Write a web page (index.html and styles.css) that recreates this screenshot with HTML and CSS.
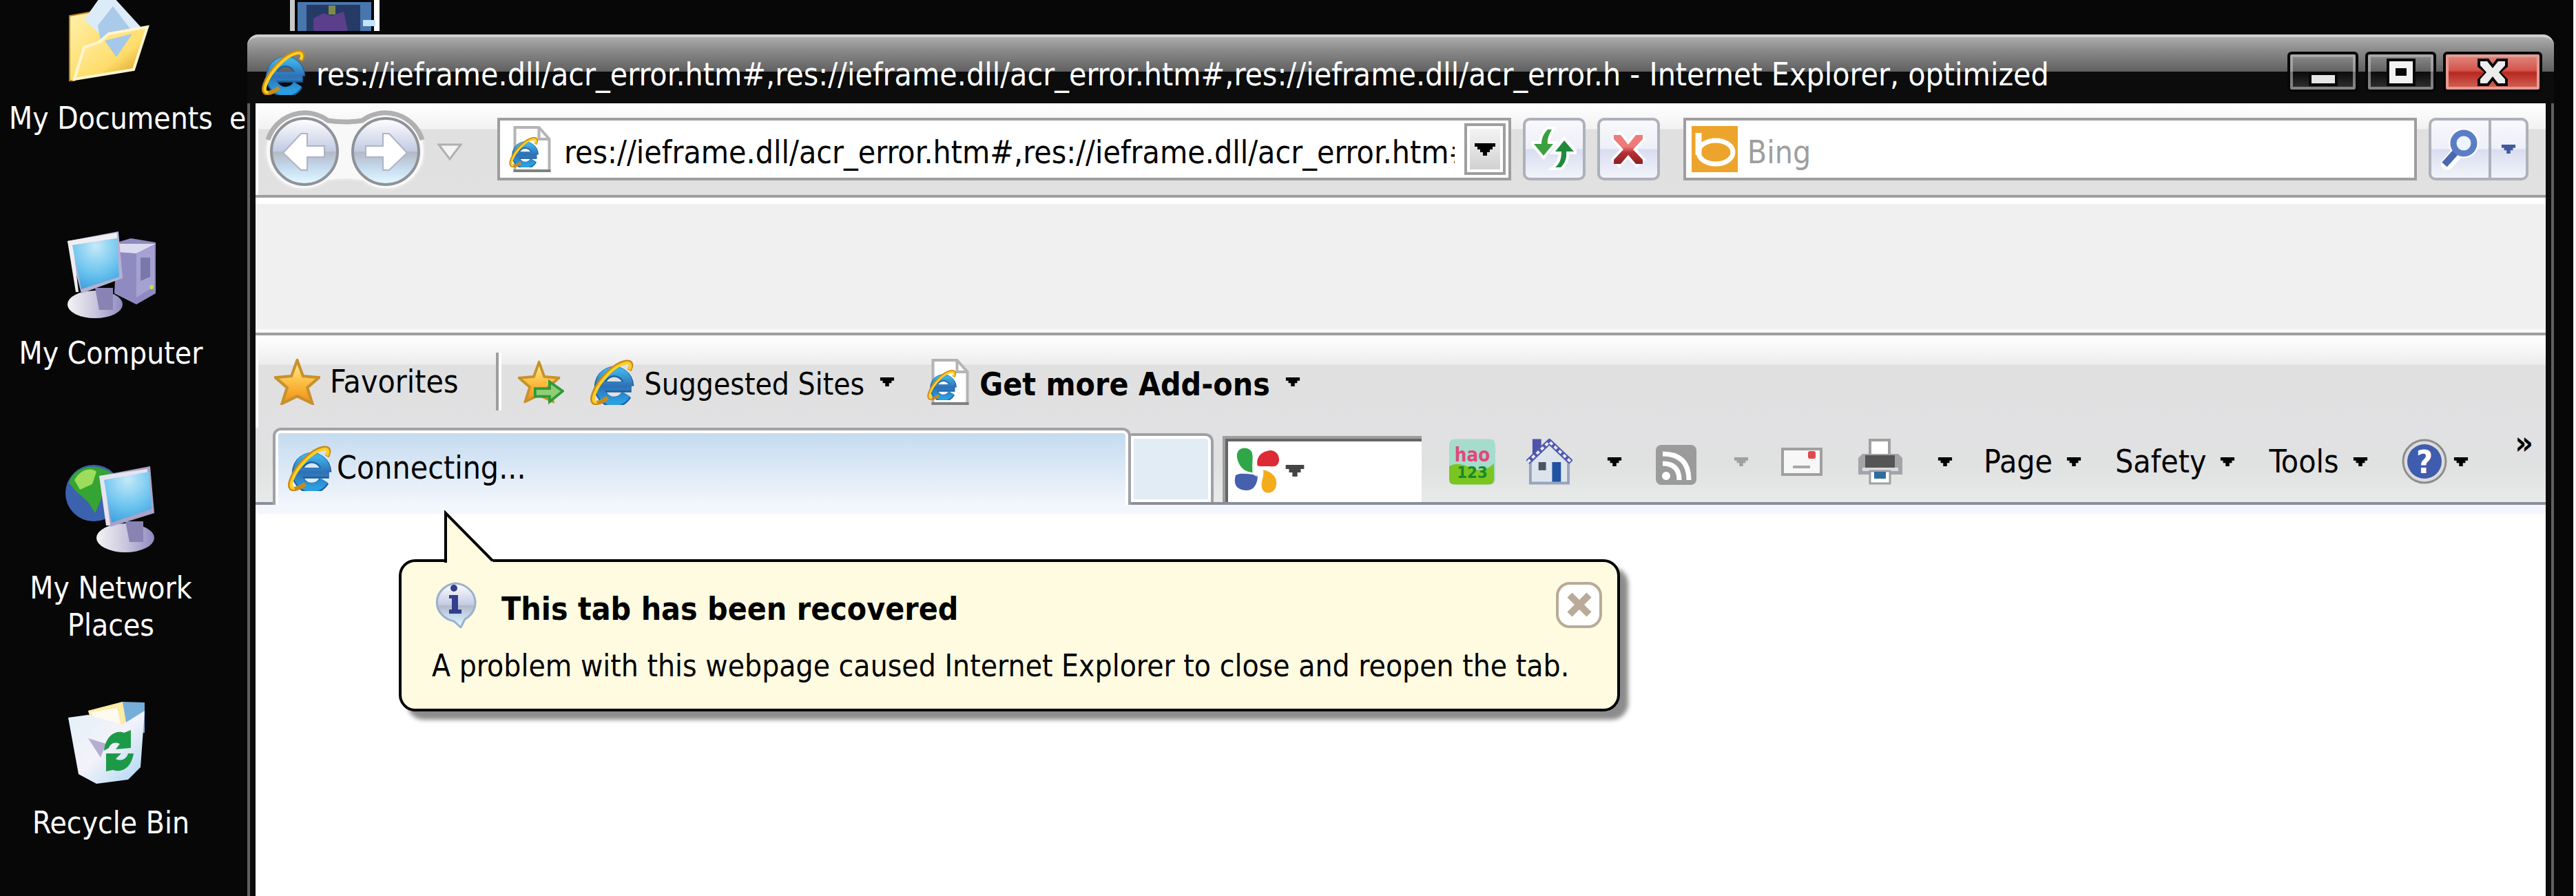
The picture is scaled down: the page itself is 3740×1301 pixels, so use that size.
FILE: index.html
```html
<!DOCTYPE html>
<html lang="en">
<head>
  <meta charset="UTF-8" />
  <title>Internet Explorer, optimized</title>
  <link rel="stylesheet" href="styles.css">
</head>
<body>

  <!-- shared icon shapes -->
  <svg class="sprites" width="0" height="0" aria-hidden="true">
    <defs>
      <linearGradient id="blue" x1="0" y1="0" x2="0" y2="1">
        <stop offset="0" stop-color="#3fb0e6" />
        <stop offset="0.5" stop-color="#2f6fb5" />
        <stop offset="1" stop-color="#2a9fe2" />
      </linearGradient>
      <linearGradient id="gold" x1="0" y1="0" x2="0" y2="1">
        <stop offset="0" stop-color="#fff3a0" />
        <stop offset="0.45" stop-color="#fdc44a" />
        <stop offset="1" stop-color="#f08f14" />
      </linearGradient>
      <linearGradient id="folder" x1="0" y1="0" x2="1" y2="1">
        <stop offset="0" stop-color="#fff2b0" />
        <stop offset="0.6" stop-color="#ffdc6a" />
        <stop offset="1" stop-color="#c98d16" />
      </linearGradient>
      <radialGradient id="screen" cx="0.5" cy="0.15" r="0.9">
        <stop offset="0" stop-color="#c4e9f8" />
        <stop offset="0.6" stop-color="#6cc4ef" />
        <stop offset="1" stop-color="#3d9fdc" />
      </radialGradient>
      <linearGradient id="plastic" x1="0" y1="0" x2="1" y2="0">
        <stop offset="0" stop-color="#f4f4f4" />
        <stop offset="0.5" stop-color="#c9c6de" />
        <stop offset="1" stop-color="#8f8abf" />
      </linearGradient>
      <linearGradient id="orb" x1="0" y1="0" x2="0" y2="1">
        <stop offset="0" stop-color="#ffffff" />
        <stop offset="0.49" stop-color="#c3cbe4" />
        <stop offset="0.51" stop-color="#b4b9c4" />
        <stop offset="0.75" stop-color="#c6dbef" />
        <stop offset="1" stop-color="#e6fbff" />
      </linearGradient>
      <linearGradient id="redx" x1="0" y1="0" x2="0" y2="1">
        <stop offset="0.4" stop-color="#ef7a7a" />
        <stop offset="0.6" stop-color="#b83236" />
        <stop offset="1" stop-color="#8c2024" />
      </linearGradient>
      <linearGradient id="bin" x1="0" y1="0" x2="1" y2="1">
        <stop offset="0" stop-color="#e2f0f8" />
        <stop offset="0.5" stop-color="#f4f2fa" />
        <stop offset="1" stop-color="#a8d4f2" />
      </linearGradient>
    </defs>
    <symbol id="ie" viewBox="0 0 64 64">
      <path d="M59 39H22M55 38A20 21 0 1 0 52 50" fill="none" stroke="#1d5f9f" stroke-width="15" />
      <path d="M58 38H20M55 37A20 21 0 1 0 52 49" fill="none" stroke="url(#blue)" stroke-width="12" />
      <path d="M56 16C66-2 44 2 26 20C6 40-2 64 12 61C18 60 22 57 26 54" fill="none" stroke="#c98a1c" stroke-width="6" />
      <path d="M56 15C63 0 44 4 27 21C8 40 1 62 11 60" fill="none" stroke="#fdd020" stroke-width="4" />
    </symbol>
    <symbol id="page" viewBox="0 0 64 67">
      <path d="M12 2H47L62 19V65H12Z" fill="#fff" stroke="#b4b4b4" stroke-width="4" />
      <path d="M47 2V19H62" fill="none" stroke="#b4b4b4" stroke-width="4" />
      <path d="M10 65H64" stroke="#808080" stroke-width="4" />
      <use href="#ie" x="0" y="15" width="50" height="45" />
    </symbol>
    <symbol id="star" viewBox="0 0 64 64">
      <path d="M32 2L40 24L62 26L46 40L53 62L32 52L11 62L18 40L2 26L24 24Z" fill="url(#gold)" stroke="#c8912c" stroke-width="4" />
    </symbol>
    <symbol id="down" viewBox="0 0 24 14">
      <path d="M1 0H23V5H19V9H15V14H9V9H5V5H1Z" fill="currentColor" />
    </symbol>
    <symbol id="cross" viewBox="0 0 40 40">
      <path d="M6 6L34 34M34 6L6 34" stroke="currentColor" stroke-width="10" />
    </symbol>
  </svg>

  <main class="desktop">

    <ul class="shortcuts">
      <li class="shortcut">
        <svg viewBox="0 0 134 134">
          <path d="M7 32L40 26L56 50L84 62L14 126H7Z" fill="url(#folder)" stroke="#b98420" stroke-width="2" />
          <path d="M28 38L52 4L70 4L112 50L84 60L60 66Z" fill="#dcebf8" />
          <path d="M70 18L96 52L52 68L48 46Z" fill="#a9cbe9" />
          <path d="M28 78L50 70L64 58L120 48L100 110L14 124Z" fill="url(#folder)" stroke="#fff6cf" stroke-width="4" />
          <path d="M58 68L98 58L75 92Z" fill="#a5c8ea" />
        </svg>
        <span>My Documents</span>
      </li>
      <li class="shortcut">
        <svg viewBox="0 0 134 134">
          <path d="M76 20L96 14L132 20V94L104 110L72 94Z" fill="#8f8bc0" />
          <path d="M76 22L132 22L104 36L78 34Z" fill="#dcdaf0" />
          <path d="M104 36L130 24V84L104 100Z" fill="#a5a2d2" />
          <path d="M110 42H124V70L110 76Z" fill="#7a77ab" />
          <circle cx="126" cy="85" r="3" fill="#c5e04a" />
          <ellipse cx="44" cy="110" rx="40" ry="20" fill="url(#plastic)" />
          <path d="M44 86H70V118H50Z" fill="#8883b2" />
          <path d="M4 18L78 4L84 72L24 94Z" fill="#b6b1d2" />
          <path d="M4 18L76 6V14L12 24L20 92H16Z" fill="#efeff2" />
          <path d="M11 24L76 14L79 70L24 88Z" fill="url(#screen)" />
        </svg>
        <span>My Computer</span>
      </li>
      <li class="shortcut">
        <svg viewBox="0 0 134 134">
          <circle cx="42" cy="43" r="41" fill="#3b62ae" />
          <path d="M6 28C14 4 44-2 68 14L56 36L52 54L44 72L34 56L16 40Z" fill="#35a432" />
          <path d="M14 24C24 6 40 6 46 12L40 30L22 38Z" fill="#9ddc5c" />
          <ellipse cx="88" cy="108" rx="42" ry="21" fill="url(#plastic)" />
          <path d="M88 84H114V114H94Z" fill="#8883b2" />
          <path d="M50 18L124 4L130 72L66 92Z" fill="#a9a3c9" />
          <path d="M50 18L120 8V14L58 24L66 90H60Z" fill="#e6e4ee" />
          <path d="M57 24L122 12L126 66L68 86Z" fill="url(#screen)" />
        </svg>
        <span>My Network Places</span>
      </li>
      <li class="shortcut">
        <svg viewBox="0 0 134 134">
          <path d="M34 18L84 5L116 6V50L60 50Z" fill="#76aeda" />
          <path d="M34 18L84 5L90 40L40 42Z" fill="#fdeaa4" />
          <path d="M38 20L76 14L82 40L44 42Z" fill="#fffaf0" />
          <path d="M5 28L34 24L84 38L116 18L110 100L92 118L46 124L20 110Z" fill="url(#bin)" />
          <path d="M34 58L60 66L52 86Z" fill="#b4afd0" />
          <path d="M57 76C60 50 78 46 86 50L96 46V72L74 74L80 66C72 62 66 66 64 72Z" fill="#1d9a48" />
          <path d="M100 80C96 104 80 108 70 104L60 106V80H82L74 88C82 92 90 88 92 80Z" fill="#1d9a48" />
        </svg>
        <span>Recycle Bin</span>
      </li>
    </ul>

    <div class="behind">
      <svg viewBox="0 0 134 134">
        <path d="M2 0H132V134H2Z" fill="#c8c8c8" />
        <path d="M124 0H132V134H124Z" fill="#fff" />
        <path d="M9 78H124V134H9Z" fill="#050505" />
        <path d="M13 92H120V134H13Z" fill="#4877ae" />
        <path d="M26 96H104V134H26Z" fill="#263a66" />
        <path d="M36 116L50 108L62 112L80 106L86 134H36Z" fill="#5b3f8c" />
        <path d="M58 97H68V110H58Z" fill="#7c8a4a" />
        <path d="M108 118H126V127H108Z" fill="#c4e4fb" />
      </svg>
      <span>e</span>
    </div>

    <section class="window">

      <header class="titlebar">
        <svg class="icon"><use href="#ie" /></svg>
        <h1>res://ieframe.dll/acr_error.htm#,res://ieframe.dll/acr_error.htm#,res://ieframe.dll/acr_error.h - Internet Explorer, optimized</h1>
        <div class="window-buttons">
          <button class="win-btn" aria-label="Minimize">
            <svg viewBox="0 0 60 50"><path d="M9 26H51V46H9Z" fill="#070707" /><path d="M13 30H47V42H13Z" fill="#e6e6e6" /></svg>
          </button>
          <button class="win-btn" aria-label="Maximize">
            <svg viewBox="0 0 60 50"><path d="M9 6H51V46H9Z" fill="#070707" /><path d="M13 10H47V42H13ZM22 20V31H38V20Z" fill="#f2f2f2" fill-rule="evenodd" /></svg>
          </button>
          <button class="win-btn win-close" aria-label="Close">
            <svg viewBox="0 0 60 50"><path d="M8 6H24L30 14L36 6H52V18L42 26L52 36V46H36L30 38L24 46H8V36L18 26L8 18Z" fill="#0a0707" /><path d="M12 10H22L30 20L38 10H48V16L39 26L48 36V42H38L30 32L22 42H12V36L21 26L12 16Z" fill="#ececec" /></svg>
          </button>
        </div>
      </header>

      <div class="client">

        <nav class="navbar">
          <div class="travel">
            <svg class="shell" viewBox="0 0 232 116">
              <path d="M91 16Q116 20 141 16A56 56 0 1 1 141 104Q116 100 91 104A56 56 0 1 1 91 16Z" fill="#f8f8f8" stroke="#e6e6e6" stroke-width="3" />
              <path d="M4 44A56 56 0 0 1 91 16Q116 20 141 16A56 56 0 0 1 228 44" fill="none" stroke="#b0b0b0" stroke-width="7" />
            </svg>
            <button class="orb" aria-label="Back">
              <svg viewBox="0 0 102 102">
                <circle cx="51" cy="51" r="48" fill="url(#orb)" stroke="#8e9298" stroke-width="4" />
                <path d="M20 53L46 25H55V43H80V59H55V78H46Z" fill="#fff" stroke="#aeb4c6" stroke-width="2" />
              </svg>
            </button>
            <button class="orb" aria-label="Forward">
              <svg viewBox="0 0 102 102">
                <circle cx="51" cy="51" r="48" fill="url(#orb)" stroke="#8e9298" stroke-width="4" />
                <path d="M82 53L56 25H47V43H22V59H47V78H56Z" fill="#fff" stroke="#aeb4c6" stroke-width="2" />
              </svg>
            </button>
          </div>
          <button class="recent" aria-label="Recent pages">
            <svg viewBox="0 0 38 26"><path d="M3 2H35L19 23Z" fill="#f4f4f4" stroke="#b0b0b0" stroke-width="3" /></svg>
          </button>

          <div class="field address">
            <svg class="icon"><use href="#page" /></svg>
            <input type="text" aria-label="Address" value="res://ieframe.dll/acr_error.htm#,res://ieframe.dll/acr_error.htm#" />
            <button class="address-drop" aria-label="Show address list">
              <svg viewBox="0 0 32 18"><path d="M1 0H31V5H27V9H23V13H19V18H13V13H9V9H5V5H1Z" fill="#000" /></svg>
            </button>
          </div>

          <button class="soft-btn" aria-label="Refresh">
            <svg viewBox="0 0 66 66" stroke="#fff" stroke-width="8" paint-order="stroke">
              <path d="M24 4C18 10 15 17 15 25H4L18 42L32 25H24C23 18 26 11 30 4Z" fill="#3ba03f" />
              <path d="M48 20L35 36H44C44 46 42 53 35 59H43C49 53 52 46 51 36H62Z" fill="#1f8a3c" />
            </svg>
          </button>
          <button class="soft-btn" aria-label="Stop">
            <svg viewBox="0 0 66 66">
              <path d="M14 12L52 54M52 12L14 54" stroke="#fff" stroke-width="18" />
              <path d="M12 12H22L33 26L44 12H54V18L40 33L54 48V54H44L33 41L22 54H12V48L26 33L12 18Z" fill="url(#redx)" />
            </svg>
          </button>

          <div class="field search">
            <svg class="icon" viewBox="0 0 67 67">
              <rect width="67" height="67" fill="#eda42c" />
              <path d="M10 10V42" stroke="#fff" stroke-width="9" />
              <ellipse cx="35" cy="38" rx="25" ry="17" fill="none" stroke="#fff" stroke-width="7" />
            </svg>
            <input type="text" aria-label="Search" placeholder="Bing" />
          </div>

          <div class="split">
            <button class="soft-btn" aria-label="Search now">
              <svg viewBox="0 0 66 66">
                <path d="M14 54L30 36" stroke="#fff" stroke-width="18" stroke-linecap="round" />
                <circle cx="38" cy="24" r="15" fill="#fff" stroke="#fff" stroke-width="14" />
                <path d="M10 55L29 34" stroke="#4a68b0" stroke-width="10" />
                <circle cx="38" cy="24" r="15" fill="#edf4fb" stroke="#5b7dc4" stroke-width="9" />
              </svg>
            </button>
            <button class="soft-btn slim" aria-label="Search options">
              <svg class="arrow"><use href="#down" /></svg>
            </button>
          </div>
        </nav>

        <div class="band"></div>

        <div class="favbar">
          <button class="tool"><svg class="icon"><use href="#star" /></svg><span>Favorites</span></button>
          <span class="divider"></span>
          <button class="tool" aria-label="Add to Favorites Bar">
            <svg class="icon" viewBox="0 0 70 64">
              <use href="#star" width="64" height="64" />
              <path d="M26 42H48V32L68 46L48 62V54H26Z" fill="#8fce74" stroke="#2f9a3c" stroke-width="4" />
            </svg>
          </button>
          <button class="tool low suggested"><svg class="icon"><use href="#ie" /></svg><span>Suggested Sites</span><svg class="arrow"><use href="#down" /></svg></button>
          <button class="tool low strong"><svg class="icon"><use href="#page" /></svg><span>Get more Add-ons</span><svg class="arrow"><use href="#down" /></svg></button>
        </div>

        <div class="tabrow">
          <button class="tab active"><svg class="icon"><use href="#ie" /></svg><span>Connecting...</span></button>
          <button class="tab new" aria-label="New Tab"></button>

          <div class="toolbox">
            <button aria-label="Search provider">
              <svg class="icon" viewBox="0 0 67 67">
                <path d="M4 14C2-4 24-2 26 8C28 18 24 28 28 36C14 36 6 26 4 14Z" fill="#2fa648" />
                <path d="M34 28C30 12 42 4 54 4C68 6 68 26 58 27C50 28 42 26 34 28Z" fill="#dc2a36" />
                <path d="M2 40C8 36 22 38 34 40C34 50 30 62 18 62C4 62-2 54 2 40Z" fill="#4560ad" />
                <path d="M42 32C58 36 64 46 60 58C56 68 42 68 40 58C38 48 44 42 42 32Z" fill="#f5ac1c" />
                <circle cx="34" cy="34" r="8" fill="#fff" opacity="0.7" />
              </svg>
              <svg class="arrow big"><use href="#down" /></svg>
            </button>
            <input type="text" aria-label="Toolbar search" />
          </div>

          <div class="commands">
            <button class="cmd" aria-label="hao123">
              <svg class="icon" viewBox="0 0 68 67">
                <rect width="68" height="67" rx="8" fill="#a6dccb" />
                <path d="M0 40Q14 32 34 44Q52 50 66 36V60Q66 67 58 67H8Q0 67 0 60Z" fill="#7cc520" />
                <text x="34" y="33" class="hao">hao</text>
                <text x="34" y="57" class="num">123</text>
              </svg>
            </button>
            <button class="cmd home" aria-label="Home">
              <svg class="icon" viewBox="0 0 68 67">
                <path d="M9 0H22V24H9Z" fill="#4d53a8" />
                <path d="M34 6L62 34V65H6V34Z" fill="#dde4ec" stroke="#98a4bc" stroke-width="4" />
                <path d="M2 34L34 4L66 34" fill="none" stroke="#5057ae" stroke-width="8" />
                <path d="M2 34L34 4L66 34" fill="none" stroke="#e9ebf8" stroke-width="4" stroke-dasharray="5 4" />
                <path d="M18 34H29V46H18Z" fill="#4a5564" />
                <path d="M38 34H51V63H38Z" fill="#1f52a0" />
              </svg>
              <svg class="arrow"><use href="#down" /></svg>
            </button>
            <button class="cmd feeds" aria-label="Feeds">
              <svg class="icon" viewBox="0 0 67 67">
                <rect x="4" y="9" width="59" height="58" rx="8" fill="#9b9b9b" />
                <path d="M14 22Q52 22 52 60M14 36Q38 36 38 60" fill="none" stroke="#fff" stroke-width="7" />
                <circle cx="19" cy="54" r="6" fill="#fff" />
              </svg>
              <svg class="arrow"><use href="#down" /></svg>
            </button>
            <button class="cmd" aria-label="Read Mail">
              <svg class="icon" viewBox="0 0 67 67">
                <rect x="4" y="15" width="56" height="37" fill="#f7f7f7" stroke="#a0a0a0" stroke-width="4" />
                <path d="M19 41H44" stroke="#a8a8a8" stroke-width="4" />
                <rect x="41" y="18" width="11" height="11" rx="3" fill="#e0484c" />
              </svg>
            </button>
            <button class="cmd print" aria-label="Print">
              <svg class="icon" viewBox="0 0 67 67">
                <path d="M19 2H47V26H19Z" fill="#fff" stroke="#a0a0a0" stroke-width="4" />
                <path d="M8 22H60L66 28V52H2V28Z" fill="#a4a4a8" />
                <path d="M12 24H55V42H12Z" fill="#555" />
                <path d="M8 42H60V47H8Z" fill="#d9dbe2" />
                <path d="M19 47H48V65H19Z" fill="#fff" stroke="#a0a0a0" stroke-width="3" />
                <path d="M25 48H42V58H25Z" fill="#2d6e9e" />
              </svg>
              <svg class="arrow"><use href="#down" /></svg>
            </button>
            <button class="cmd menu"><span>Page</span><svg class="arrow"><use href="#down" /></svg></button>
            <button class="cmd menu"><span>Safety</span><svg class="arrow"><use href="#down" /></svg></button>
            <button class="cmd menu"><span>Tools</span><svg class="arrow"><use href="#down" /></svg></button>
            <button class="cmd help" aria-label="Help">
              <svg class="icon" viewBox="0 0 67 67">
                <circle cx="33" cy="33" r="31" fill="#dcdcdc" stroke="#8d8d8d" stroke-width="3" />
                <circle cx="33" cy="33" r="25" fill="#3f5cae" />
                <text x="33" y="50" class="mark">?</text>
              </svg>
              <svg class="arrow"><use href="#down" /></svg>
            </button>
            <button class="more" aria-label="More commands">»</button>
          </div>
        </div>

        <div class="content">
          <div class="balloon" role="alert">
            <svg class="pointer" viewBox="0 0 76 76">
              <path d="M2 0L72 76H2Z" fill="#fffbe1" />
              <path d="M2 76V4L70 73" fill="none" stroke="#000" stroke-width="4" />
            </svg>
            <div class="balloon-head">
              <svg class="icon" viewBox="0 0 67 67">
                <path d="M33 2A31 28 0 0 1 48 54L42 66L32 57A31 28 0 0 1 33 2Z" fill="url(#orb)" stroke="#9ab0cc" stroke-width="3" />
                <circle cx="32" cy="9" r="5" fill="#333f8c" />
                <path d="M25 19H38V40H43V46H25V40H29V24H25Z" fill="#333f8c" />
              </svg>
              <h2>This tab has been recovered</h2>
              <button class="dismiss" aria-label="Close"><svg viewBox="0 0 40 40"><use href="#cross" /></svg></button>
            </div>
            <p>A problem with this webpage caused Internet Explorer to close and reopen the tab.</p>
          </div>
        </div>

      </div>
    </section>
  </main>

</body>
</html>
```

FILE: styles.css
```css
html, body {
  margin: 0;
  padding: 0;
  height: 100%;
  overflow: hidden;
}

body {
  background-color: #070707;
  color: #000;
  font-family: "DejaVu Sans Condensed", "DejaVu Sans", sans-serif;
  font-size: 46px;
  line-height: 54px;
}

* {
  box-sizing: border-box;
}

button, input {
  font: inherit;
  color: inherit;
  margin: 0;
  padding: 0;
  border: 0;
  background: none;
}

h1, h2, p {
  margin: 0;
  font-size: inherit;
  font-weight: normal;
}

svg {
  display: block;
  flex: none;
}

.sprites {
  position: absolute;
}

.icon {
  width: 67px;
  height: 67px;
}

.arrow {
  width: 22px;
  height: 13px;
}

/* desktop */

.desktop {
  position: relative;
  height: 100%;
  overflow: hidden;
  border-right: 4px solid #f4f4f4;
}

.shortcuts {
  list-style: none;
  width: 322px;
  margin: -9px 0 0;
  padding: 0;
}

.shortcut {
  display: flex;
  flex-direction: column;
  align-items: center;
  gap: 20px;
  height: 341px;
  padding: 0 30px;
  color: #fff;
  font-size: 44px;
  text-align: center;
  white-space: nowrap;
}

.shortcut:nth-child(3) {
  white-space: normal;
}

.shortcut svg,
.behind svg {
  width: 134px;
  height: 134px;
}

.behind {
  position: absolute;
  left: 333px;
  top: -89px;
  width: 306px;
  display: flex;
  flex-direction: column;
  gap: 100px;
  color: #fff;
  font-size: 44px;
}

.behind svg {
  align-self: center;
}

/* window frame */

.window {
  position: absolute;
  left: 359px;
  right: 28px;
  top: 50px;
  bottom: -40px;
  display: flex;
  flex-direction: column;
  background-color: #0b0c0b;
  border: 0 solid #606060;
  border-width: 0 4px;
  border-radius: 16px 16px 0 0;
}

.titlebar {
  display: flex;
  align-items: center;
  gap: 14px;
  height: 100px;
  margin: 0 -4px;
  padding: 4px 17px 0 19px;
  color: #fff;
  background: linear-gradient(#acacac, #8c8c8c 18px, #606060 50px, #0b0c0b 50px);
  border-top: 4px solid #cfcfcf;
  border-radius: 16px 16px 0 0;
}

.titlebar h1 {
  flex: 1;
  min-width: 0;
  padding-top: 8px;
  overflow: hidden;
  white-space: nowrap;
}

.window-buttons {
  display: flex;
  gap: 10px;
}

.win-btn {
  display: flex;
  align-items: center;
  justify-content: center;
  width: 103px;
  height: 59px;
  border: 4px solid #070707;
  border-radius: 6px;
  background: linear-gradient(#8c8c8c, #606060 50%, #0b0b0b 50%, #333);
  box-shadow: inset 0 0 0 4px rgba(190, 190, 190, 0.6);
}

.win-btn svg {
  width: 60px;
  height: 50px;
}

.win-close {
  width: 144px;
  background: linear-gradient(#e08a80, #d4564e 45%, #b82820 52%, #d4685c);
  box-shadow: inset 0 0 0 4px #e49c94;
}

.client {
  flex: 1;
  display: flex;
  flex-direction: column;
  margin: 0 8px;
  background: #fff;
}

/* navigation bar */

.navbar {
  display: flex;
  align-items: center;
  height: 137px;
  padding: 0 25px 0 14px;
  background: linear-gradient(#fff, #f2f2f2 37px, #e0e0e0 38px, #e1e1e1);
  border-bottom: 4px solid #9e9e9e;
  box-shadow: inset 4px 0 #fff;
}

.travel {
  position: relative;
  display: flex;
  gap: 16px;
  width: 232px;
  padding: 10px 6px 4px;
}

.shell {
  position: absolute;
  left: 0;
  top: 0;
  width: 232px;
  height: 116px;
  overflow: visible;
}

.orb {
  position: relative;
  width: 102px;
  height: 102px;
}

.recent {
  margin: 8px 50px 0 17px;
}

.recent svg {
  width: 38px;
  height: 26px;
}

.field {
  display: flex;
  align-items: center;
  height: 91px;
  padding: 4px 4px 4px 8px;
  background: #fff;
  border: 4px solid #9e9e9e;
}

.field input {
  flex: 1;
  min-width: 0;
  height: 67px;
  padding-top: 8px;
}

.address {
  flex: 25 1 0;
  gap: 18px;
}

.address input {
  margin-right: -4px;
}

.address-drop {
  display: flex;
  align-items: center;
  justify-content: center;
  width: 60px;
  height: 75px;
  background: linear-gradient(#f6f6f6, #cfcfcf);
  border: 4px solid #9e9e9e;
  box-shadow: inset 0 0 0 4px #fff;
}

.address-drop svg {
  width: 32px;
  height: 18px;
}

.search {
  flex: 18 1 0;
  gap: 14px;
  margin-left: 34px;
}

.search input::placeholder {
  color: #9e9e9e;
  opacity: 1;
}

.soft-btn {
  display: flex;
  align-items: center;
  justify-content: center;
  width: 91px;
  height: 91px;
  margin-left: 17px;
  color: #43599f;
  background: linear-gradient(#f8f8fc, #eef0f8 49%, #d9ddf0 51%, #f2f4fa);
  border: 4px solid #aeb1b9;
  border-radius: 10px;
}

.soft-btn svg {
  width: 66px;
  height: 66px;
}

.split {
  display: flex;
}

.split .soft-btn {
  border-radius: 10px 0 0 10px;
}

.split .slim {
  width: 58px;
  margin-left: -4px;
  border-radius: 0 10px 10px 0;
}

.soft-btn .arrow {
  width: 22px;
  height: 13px;
}

.band {
  height: 200px;
  background: #f0f0f0;
  border-top: 9px solid #fff;
  border-bottom: 4px solid #9e9e9e;
  box-shadow: inset 0 -5px #fafafa;
}

/* favorites bar */

.favbar {
  display: flex;
  align-items: center;
  height: 134px;
  padding-left: 27px;
  background: linear-gradient(#fff, #ededed 42px, #e0e0e0 43px, #e1e1e3);
  box-shadow: inset 4px 0 #fff;
}

.tool {
  display: flex;
  align-items: center;
  gap: 14px;
  white-space: nowrap;
}

.tool .arrow {
  margin-left: 8px;
}

.low span {
  padding-top: 8px;
}

.suggested {
  margin-left: 36px;
  font-size: 44px;
}

.strong {
  margin-left: 42px;
  font-weight: bold;
}

.divider {
  width: 8px;
  height: 84px;
  margin: 0 24px 0 54px;
  border-left: 4px solid #9e9e9e;
  border-right: 4px solid #fff;
}

/* tabs and command bar */

.tabrow {
  display: flex;
  align-items: flex-end;
  height: 112px;
  padding-left: 25px;
  background: linear-gradient(#e1e1e3, #e0e1e1 50%, #e8eaea 108px, #8a8e98 108px);
}

.tab {
  border: 4px solid #a0a1a6;
  border-bottom: 0;
  box-shadow: inset 0 0 0 4px #fff;
}

.active {
  display: flex;
  align-items: center;
  gap: 6px;
  width: 1246px;
  height: 112px;
  padding-left: 16px;
  background: linear-gradient(#c4daf0, #d6e5f4 40%, #f3f6fd);
  border-radius: 12px 12px 0 0;
  box-shadow: inset 0 4px #fff, inset 4px 0 #fff, inset -4px 0 #fff;
}

.new {
  width: 120px;
  height: 100px;
  margin-bottom: 4px;
  background: #e2ecf5;
  border-left: 0;
  border-radius: 0 12px 0 0;
}

.toolbox {
  display: flex;
  align-items: center;
  width: 289px;
  height: 96px;
  margin: 0 0 4px 13px;
  background: #fff;
  border: 4px solid #9e9e9e;
  border-width: 4px 0 0 4px;
  box-shadow: inset 4px 4px #666;
}

.toolbox button {
  display: flex;
  align-items: center;
  gap: 6px;
  padding-left: 13px;
}

.toolbox input {
  flex: 1;
  min-width: 0;
  height: 60px;
}

.toolbox .arrow {
  width: 30px;
  height: 17px;
  color: #444;
}

.commands {
  flex: 1;
  display: flex;
  align-items: center;
  gap: 45px;
  height: 112px;
  margin-left: 40px;
  padding: 0 18px 14px 0;
}

.cmd {
  display: flex;
  align-items: center;
}

.home,
.feeds,
.print {
  gap: 50px;
}

.feeds .arrow {
  color: #a0a0a0;
}

.menu {
  gap: 20px;
  margin-right: 4px;
}

.help {
  gap: 8px;
}

.more {
  align-self: flex-start;
  margin-left: auto;
  line-height: 44px;
  font-weight: bold;
}

.hao {
  font: bold 28px "DejaVu Sans Condensed", "DejaVu Sans", sans-serif;
  fill: #e0487c;
  text-anchor: middle;
}

.num {
  font: bold 24px "DejaVu Sans Condensed", "DejaVu Sans", sans-serif;
  fill: #178a2c;
  text-anchor: middle;
}

.mark {
  font: bold 46px "DejaVu Sans Condensed", "DejaVu Sans", sans-serif;
  fill: #fff;
  text-anchor: middle;
}

/* page and notification */

.content {
  position: relative;
  flex: 1;
  background: linear-gradient(#f3f6fd 13px, #fff 13px);
}

.balloon {
  position: absolute;
  left: 208px;
  top: 79px;
  width: max-content;
  padding: 25px 22px 19px 44px;
  background: #fffbe1;
  border: 4px solid #000;
  border-radius: 24px;
  box-shadow: 12px 12px 6px rgba(0, 0, 0, 0.45);
}

.pointer {
  position: absolute;
  left: 62px;
  top: -75px;
  width: 76px;
  height: 76px;
}

.balloon-head {
  display: flex;
  align-items: center;
  gap: 34px;
  height: 74px;
}

.balloon-head h2 {
  flex: 1;
  padding-top: 12px;
  font-weight: bold;
}

.balloon p {
  padding: 25px 48px 16px 0;
  font-size: 44px;
}

.dismiss {
  display: flex;
  align-items: center;
  justify-content: center;
  width: 67px;
  height: 67px;
  color: #b9ab98;
  background: #fff;
  border: 4px solid #b9ab98;
  border-radius: 20px;
}

.dismiss svg {
  width: 40px;
  height: 40px;
}
```
